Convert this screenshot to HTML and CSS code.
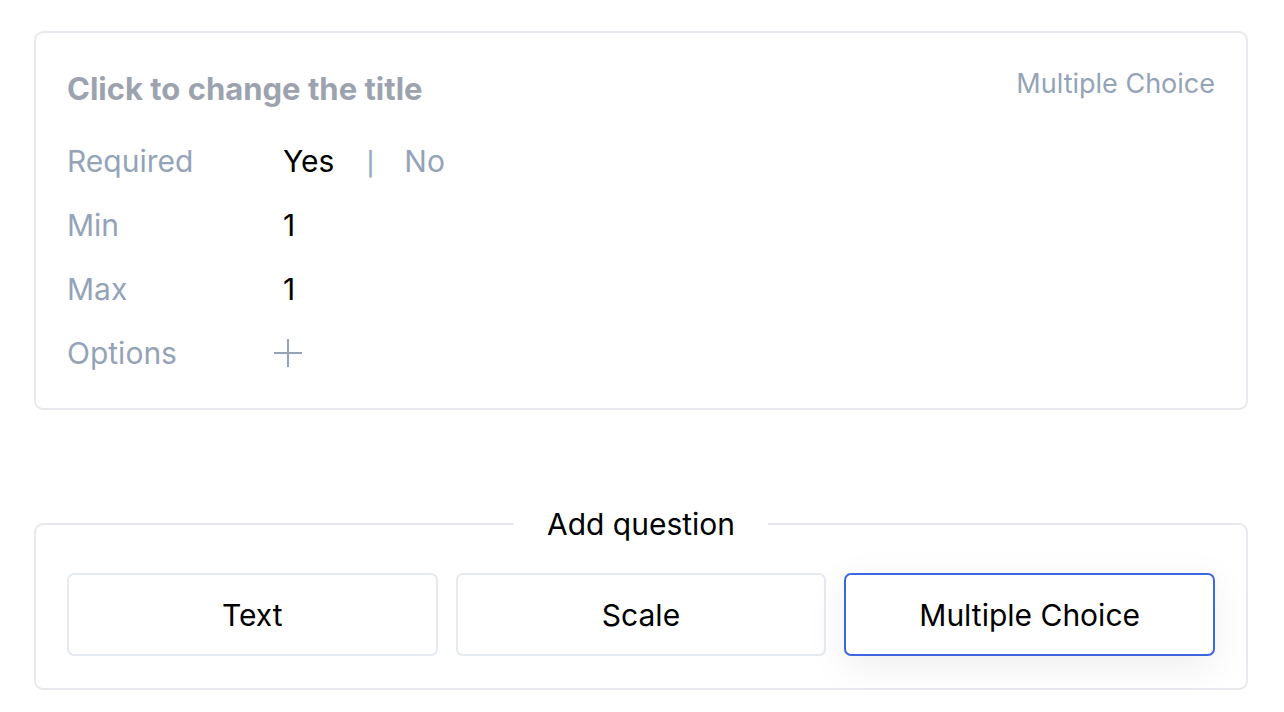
FILE: index.html
```html
<!DOCTYPE html>
<html lang="en">
<head>
<meta charset="utf-8">
<title>Question editor</title>
<link rel="stylesheet" href="styles.css">
</head>
<body>
<main class="page">
  <section class="card">
    <header class="card-head">
      <h2 class="title">Click to change the title</h2>
      <span class="type">Multiple Choice</span>
    </header>
    <div class="props">
      <span class="label">Required</span>
      <span class="value toggle"><span class="on">Yes</span><span class="sep">|</span><span class="off">No</span></span>
      <span class="label">Min</span>
      <span class="value">1</span>
      <span class="label">Max</span>
      <span class="value">1</span>
      <span class="label">Options</span>
      <span class="value"><svg class="plus" width="30" height="30" viewBox="0 0 30 30" aria-hidden="true"><path d="M15 1V29M1 15H29" stroke="#94a3b8" stroke-width="2" fill="none"/></svg></span>
    </div>
  </section>

  <fieldset class="adder">
    <legend>Add question</legend>
    <div class="choices">
      <button class="choice">Text</button>
      <button class="choice">Scale</button>
      <button class="choice selected">Multiple Choice</button>
    </div>
  </fieldset>
</main>
</body>
</html>
```
FILE: styles.css
```css
html, body {
  margin: 0;
  padding: 0;
  background: #ffffff;
}
body {
  font-family: Inter, "Noto Sans", "Liberation Sans", sans-serif;
  color: #000;
}
.page {
  padding: 31px 36px 0 34px;
  display: flex;
  flex-direction: column;
}
.card {
  border: 2px solid #e8e9ee;
  border-radius: 9px;
  padding: 31px 31px 34px;
}
.card-head {
  display: flex;
  justify-content: space-between;
  align-items: flex-start;
}
.title {
  margin: 0;
  font-size: 31px;
  line-height: 50px;
  font-weight: 700;
  color: #9ca3af;
}
.type {
  font-size: 27px;
  line-height: 40px;
  color: #94a3b8;
}
.props {
  margin-top: 26px;
  display: grid;
  grid-template-columns: 216px 1fr;
  grid-auto-rows: 42px;
  row-gap: 22px;
  font-size: 30px;
  line-height: 42px;
}
.label {
  color: #94a3b8;
}
.value {
  display: flex;
  align-items: center;
}
.toggle {
  align-items: baseline;
}
.toggle .sep {
  color: #94a3b8;
  font-size: 23px;
  line-height: 1;
  font-weight: 500;
  margin: 0 30px 0 32px;
}
.toggle .off {
  color: #94a3b8;
}
.plus {
  margin-left: -10px;
}
.adder {
  margin: 93px 0 0;
  padding: 28px 31px 32px;
  border: 2px solid #e8e9ee;
  border-radius: 9px;
  min-width: 0;
}
.adder legend {
  margin: 0 auto;
  padding: 0 33px;
  font-size: 30px;
  line-height: 42px;
}
.choices {
  display: grid;
  grid-template-columns: repeat(3, 1fr);
  column-gap: 18px;
}
.choice {
  height: 83px;
  background: #fff;
  border: 2px solid #e5e9f0;
  border-radius: 7px;
  font-family: inherit;
  font-size: 30px;
  color: #000;
  cursor: pointer;
}
.choice.selected {
  border: 2px solid #3b68e0;
  box-shadow: 0 10px 40px rgba(0, 0, 0, 0.07);
}
```
